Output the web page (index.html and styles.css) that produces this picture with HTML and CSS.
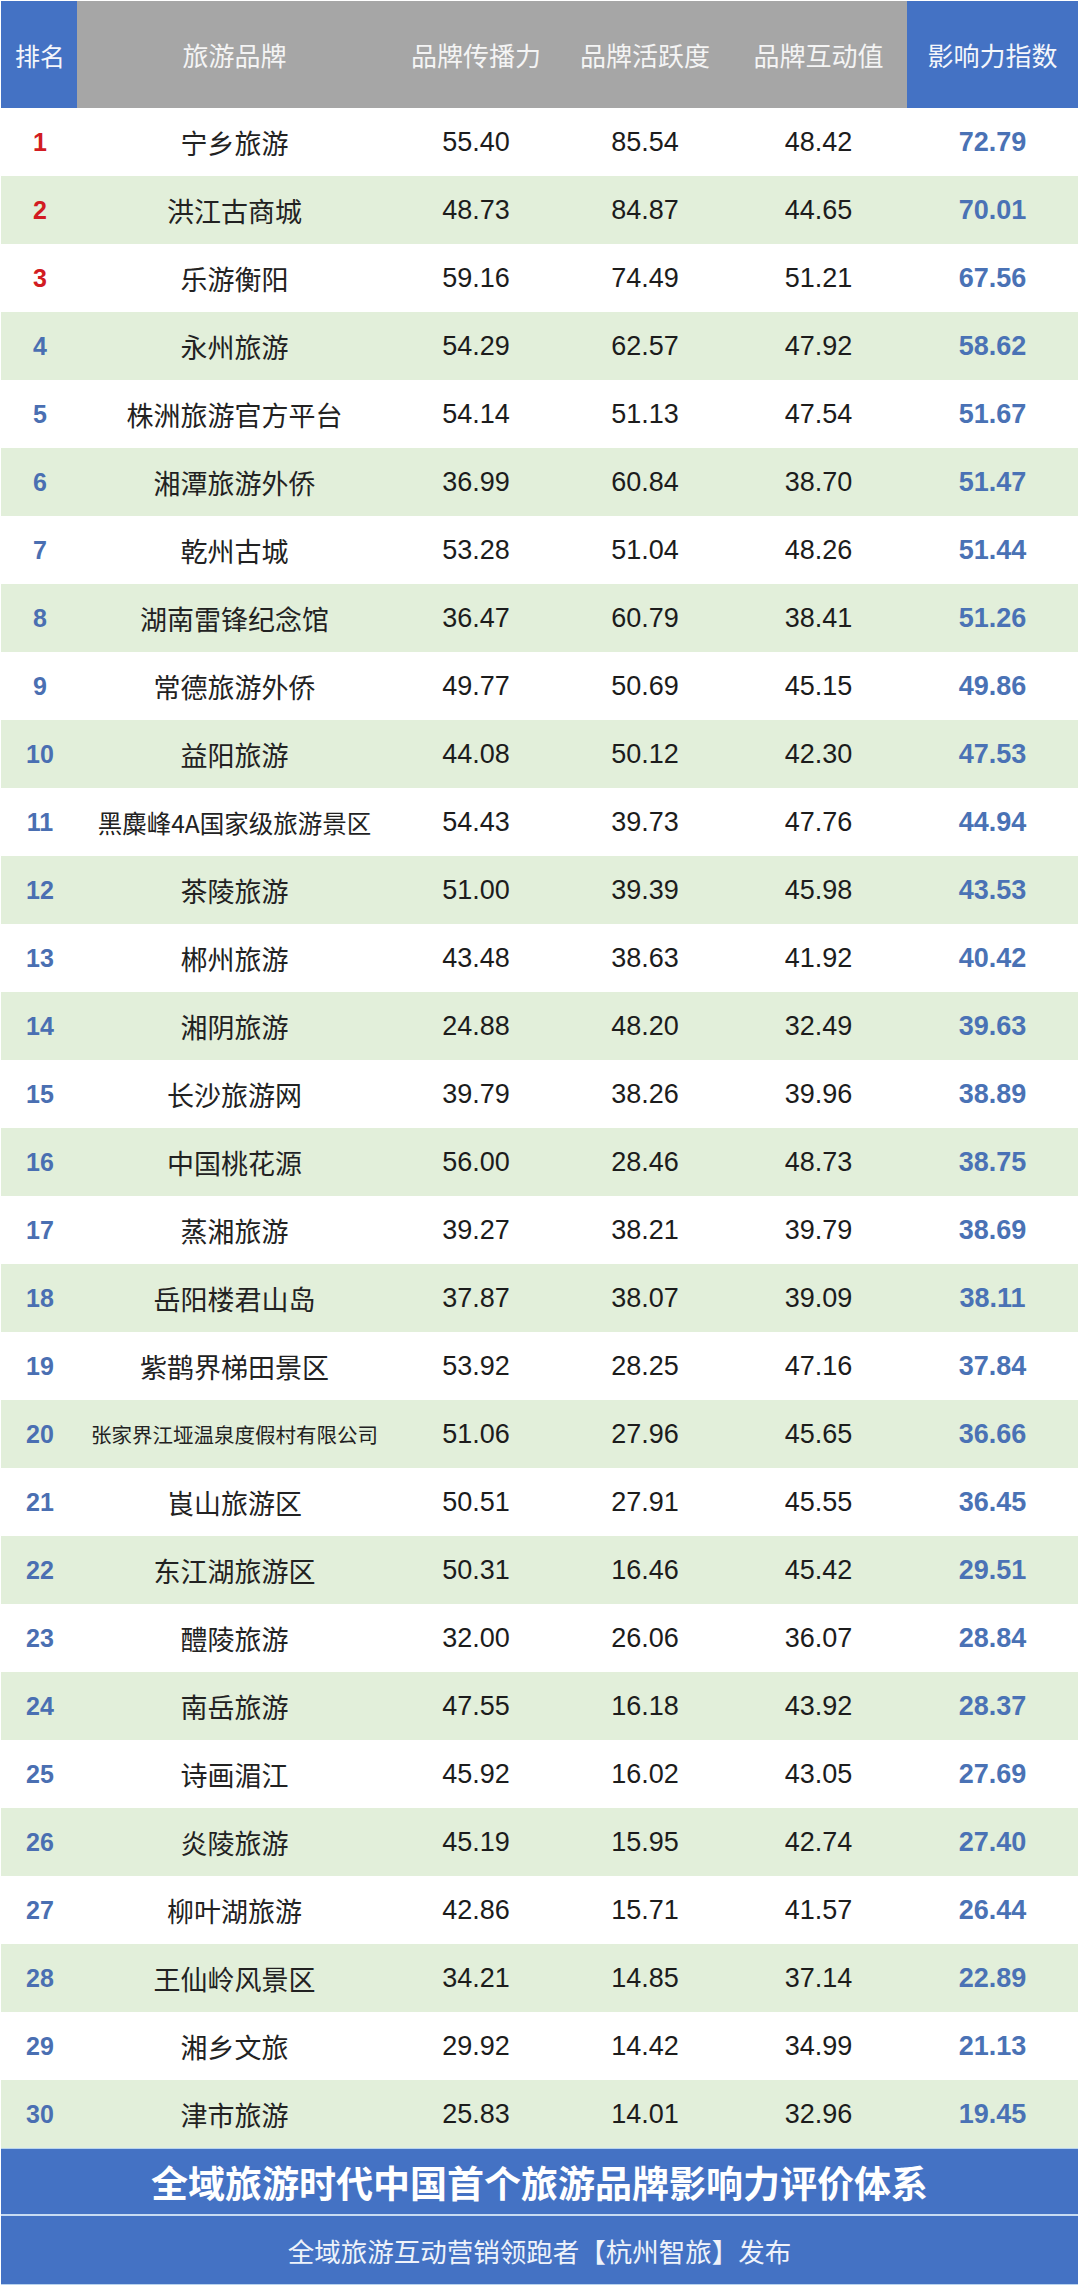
FILE: index.html
```html
<!DOCTYPE html>
<html lang="zh-CN">
<head>
<meta charset="utf-8">
<title>旅游品牌影响力指数</title>
<link rel="stylesheet" href="styles.css">
</head>
<body>
<div class="page">
  <div class="table">
    <div class="row head">
      <div class="c rank hb">排名</div>
      <div class="c">旅游品牌</div>
      <div class="c">品牌传播力</div>
      <div class="c">品牌活跃度</div>
      <div class="c">品牌互动值</div>
      <div class="c score hb">影响力指数</div>
    </div>
    <div class="row"><div class="c rank top">1</div><div class="c name">宁乡旅游</div><div class="c num">55.40</div><div class="c num">85.54</div><div class="c num">48.42</div><div class="c score">72.79</div></div>
    <div class="row alt"><div class="c rank top">2</div><div class="c name">洪江古商城</div><div class="c num">48.73</div><div class="c num">84.87</div><div class="c num">44.65</div><div class="c score">70.01</div></div>
    <div class="row"><div class="c rank top">3</div><div class="c name">乐游衡阳</div><div class="c num">59.16</div><div class="c num">74.49</div><div class="c num">51.21</div><div class="c score">67.56</div></div>
    <div class="row alt"><div class="c rank">4</div><div class="c name">永州旅游</div><div class="c num">54.29</div><div class="c num">62.57</div><div class="c num">47.92</div><div class="c score">58.62</div></div>
    <div class="row"><div class="c rank">5</div><div class="c name">株洲旅游官方平台</div><div class="c num">54.14</div><div class="c num">51.13</div><div class="c num">47.54</div><div class="c score">51.67</div></div>
    <div class="row alt"><div class="c rank">6</div><div class="c name">湘潭旅游外侨</div><div class="c num">36.99</div><div class="c num">60.84</div><div class="c num">38.70</div><div class="c score">51.47</div></div>
    <div class="row"><div class="c rank">7</div><div class="c name">乾州古城</div><div class="c num">53.28</div><div class="c num">51.04</div><div class="c num">48.26</div><div class="c score">51.44</div></div>
    <div class="row alt"><div class="c rank">8</div><div class="c name">湖南雷锋纪念馆</div><div class="c num">36.47</div><div class="c num">60.79</div><div class="c num">38.41</div><div class="c score">51.26</div></div>
    <div class="row"><div class="c rank">9</div><div class="c name">常德旅游外侨</div><div class="c num">49.77</div><div class="c num">50.69</div><div class="c num">45.15</div><div class="c score">49.86</div></div>
    <div class="row alt"><div class="c rank">10</div><div class="c name">益阳旅游</div><div class="c num">44.08</div><div class="c num">50.12</div><div class="c num">42.30</div><div class="c score">47.53</div></div>
    <div class="row"><div class="c rank">11</div><div class="c name sm">黑麋峰4A国家级旅游景区</div><div class="c num">54.43</div><div class="c num">39.73</div><div class="c num">47.76</div><div class="c score">44.94</div></div>
    <div class="row alt"><div class="c rank">12</div><div class="c name">茶陵旅游</div><div class="c num">51.00</div><div class="c num">39.39</div><div class="c num">45.98</div><div class="c score">43.53</div></div>
    <div class="row"><div class="c rank">13</div><div class="c name">郴州旅游</div><div class="c num">43.48</div><div class="c num">38.63</div><div class="c num">41.92</div><div class="c score">40.42</div></div>
    <div class="row alt"><div class="c rank">14</div><div class="c name">湘阴旅游</div><div class="c num">24.88</div><div class="c num">48.20</div><div class="c num">32.49</div><div class="c score">39.63</div></div>
    <div class="row"><div class="c rank">15</div><div class="c name">长沙旅游网</div><div class="c num">39.79</div><div class="c num">38.26</div><div class="c num">39.96</div><div class="c score">38.89</div></div>
    <div class="row alt"><div class="c rank">16</div><div class="c name">中国桃花源</div><div class="c num">56.00</div><div class="c num">28.46</div><div class="c num">48.73</div><div class="c score">38.75</div></div>
    <div class="row"><div class="c rank">17</div><div class="c name">蒸湘旅游</div><div class="c num">39.27</div><div class="c num">38.21</div><div class="c num">39.79</div><div class="c score">38.69</div></div>
    <div class="row alt"><div class="c rank">18</div><div class="c name">岳阳楼君山岛</div><div class="c num">37.87</div><div class="c num">38.07</div><div class="c num">39.09</div><div class="c score">38.11</div></div>
    <div class="row"><div class="c rank">19</div><div class="c name">紫鹊界梯田景区</div><div class="c num">53.92</div><div class="c num">28.25</div><div class="c num">47.16</div><div class="c score">37.84</div></div>
    <div class="row alt"><div class="c rank">20</div><div class="c name xs">张家界江垭温泉度假村有限公司</div><div class="c num">51.06</div><div class="c num">27.96</div><div class="c num">45.65</div><div class="c score">36.66</div></div>
    <div class="row"><div class="c rank">21</div><div class="c name">崀山旅游区</div><div class="c num">50.51</div><div class="c num">27.91</div><div class="c num">45.55</div><div class="c score">36.45</div></div>
    <div class="row alt"><div class="c rank">22</div><div class="c name">东江湖旅游区</div><div class="c num">50.31</div><div class="c num">16.46</div><div class="c num">45.42</div><div class="c score">29.51</div></div>
    <div class="row"><div class="c rank">23</div><div class="c name">醴陵旅游</div><div class="c num">32.00</div><div class="c num">26.06</div><div class="c num">36.07</div><div class="c score">28.84</div></div>
    <div class="row alt"><div class="c rank">24</div><div class="c name">南岳旅游</div><div class="c num">47.55</div><div class="c num">16.18</div><div class="c num">43.92</div><div class="c score">28.37</div></div>
    <div class="row"><div class="c rank">25</div><div class="c name">诗画湄江</div><div class="c num">45.92</div><div class="c num">16.02</div><div class="c num">43.05</div><div class="c score">27.69</div></div>
    <div class="row alt"><div class="c rank">26</div><div class="c name">炎陵旅游</div><div class="c num">45.19</div><div class="c num">15.95</div><div class="c num">42.74</div><div class="c score">27.40</div></div>
    <div class="row"><div class="c rank">27</div><div class="c name">柳叶湖旅游</div><div class="c num">42.86</div><div class="c num">15.71</div><div class="c num">41.57</div><div class="c score">26.44</div></div>
    <div class="row alt"><div class="c rank">28</div><div class="c name">王仙岭风景区</div><div class="c num">34.21</div><div class="c num">14.85</div><div class="c num">37.14</div><div class="c score">22.89</div></div>
    <div class="row"><div class="c rank">29</div><div class="c name">湘乡文旅</div><div class="c num">29.92</div><div class="c num">14.42</div><div class="c num">34.99</div><div class="c score">21.13</div></div>
    <div class="row alt"><div class="c rank">30</div><div class="c name">津市旅游</div><div class="c num">25.83</div><div class="c num">14.01</div><div class="c num">32.96</div><div class="c score">19.45</div></div>
  </div>
  <div class="footer">
    <div class="f-title">全域旅游时代中国首个旅游品牌影响力评价体系</div>
    <div class="f-sub">全域旅游互动营销领跑者【杭州智旅】发布</div>
  </div>
</div>
</body>
</html>
```
FILE: styles.css
```css
html, body {
  margin: 0;
  padding: 0;
  background: #ffffff;
}
body {
  font-family: "Liberation Sans", "Noto Sans CJK SC", sans-serif;
  color: #1e1e1e;
}
.page {
  width: 1080px;
  padding: 1px 2px 0 1px;
  box-sizing: border-box;
}
.table {
  display: flex;
  flex-direction: column;
}
.row {
  display: grid;
  grid-template-columns: 76px 315px 168px 170px 177px 1fr;
  height: 68px;
  align-items: center;
}
.row.alt {
  background: #e2efda;
}
.c {
  display: flex;
  align-items: center;
  justify-content: center;
  height: 100%;
  white-space: nowrap;
}
.head {
  height: 107px;
  background: #a6a6a6;
  color: #f4f4f4;
  font-family: "Noto Sans CJK SC", sans-serif;
  font-size: 26px;
  font-weight: 400;
}
.head .hb {
  background: #4472c4;
  color: #f4f6fb;
  font-weight: 400;
}
.head .score {
  font-family: "Noto Sans CJK SC", sans-serif;
  font-size: 26px;
}
.rank {
  font-size: 25px;
  font-weight: 700;
  color: #4a6fb2;
  padding-left: 2px;
}
.rank.top {
  color: #d21c22;
}
.name {
  font-family: "Noto Sans CJK SC", sans-serif;
  font-size: 27px;
  color: #222222;
}
.name.sm {
  font-size: 24.5px;
}
.name.xs {
  font-size: 20.5px;
}
.num {
  font-size: 27px;
  color: #1c1c1c;
}
.score {
  font-size: 27px;
  font-weight: 700;
  color: #4a72b5;
}
.footer {
  display: flex;
  flex-direction: column;
  background: #4472c4;
  border-top: 1px solid #b9d3ee;
  border-bottom: 2px solid #b9d3ee;
  color: #ffffff;
  font-family: "Noto Sans CJK SC", sans-serif;
}
.f-title {
  height: 65px;
  display: flex;
  align-items: center;
  justify-content: center;
  font-size: 37px;
  font-weight: 700;
  border-bottom: 2px solid #c7dbf2;
}
.f-sub {
  height: 68px;
  display: flex;
  align-items: center;
  justify-content: center;
  font-size: 26.5px;
  font-weight: 400;
  color: #eef2fa;
}
```
